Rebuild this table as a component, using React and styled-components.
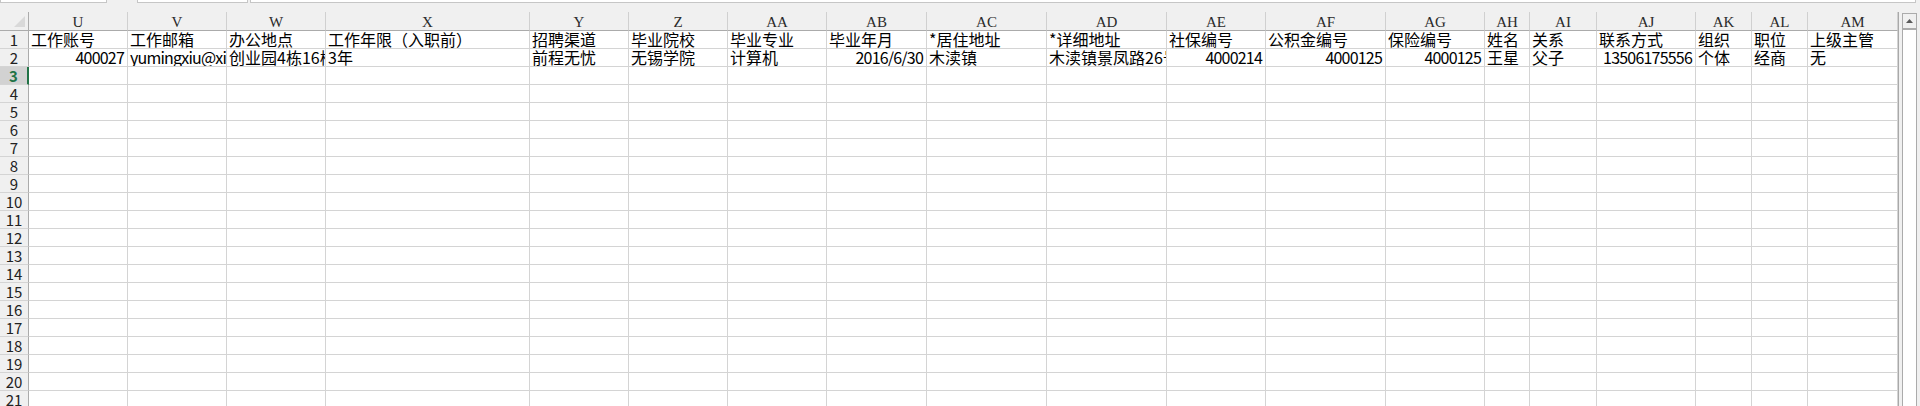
import React from 'react'
import styled, { createGlobalStyle } from 'styled-components'

const GlobalStyle = createGlobalStyle`
  html, body {
    margin: 0;
    padding: 0;
    background: #f0f0f0;
  }
  * { box-sizing: border-box; }
`

const columns = [
  { key: 'U', width: 99 },
  { key: 'V', width: 99 },
  { key: 'W', width: 99 },
  { key: 'X', width: 204 },
  { key: 'Y', width: 99 },
  { key: 'Z', width: 99 },
  { key: 'AA', width: 99 },
  { key: 'AB', width: 100 },
  { key: 'AC', width: 120 },
  { key: 'AD', width: 120 },
  { key: 'AE', width: 99 },
  { key: 'AF', width: 120 },
  { key: 'AG', width: 99 },
  { key: 'AH', width: 45 },
  { key: 'AI', width: 67 },
  { key: 'AJ', width: 99 },
  { key: 'AK', width: 56 },
  { key: 'AL', width: 56 },
  { key: 'AM', width: 90 },
]

const data = [
  ['工作账号', '工作邮箱', '办公地点', '工作年限（入职前）', '招聘渠道', '毕业院校', '毕业专业', '毕业年月', '*居住地址', '*详细地址', '社保编号', '公积金编号', '保险编号', '姓名', '关系', '联系方式', '组织', '职位', '上级主管'],
  ['400027', 'yumingxiu@xiaomi.com', '创业园4栋16楼', '3年', '前程无忧', '无锡学院', '计算机', '2016/6/30', '木渎镇', '木渎镇景凤路26号', '4000214', '4000125', '4000125', '王星', '父子', '13506175556', '个体', '经商', '无'],
]

const ROW_COUNT = 21
const SELECTED_ROW = 3

const isNumber = (v) => /^[\d/]+$/.test(v)
const isLatin = (v) => v !== '' && /^[\x20-\x7e]+$/.test(v)

const Page = styled.div`
  width: 1920px;
  height: 406px;
  overflow: hidden;
  background: #f0f0f0;
`

const FormulaStrip = styled.div`
  display: flex;
  align-items: flex-start;
  height: 12px;
`

const FormulaBox = styled.div`
  width: ${(p) => p.$width}px;
  margin-left: ${(p) => p.$offset || 0}px;
  height: 3px;
  background: #ffffff;
  border: 1px solid #c6c6c6;
  border-top: none;
`

const Body = styled.div`
  display: flex;
  align-items: flex-start;
`

const Sheet = styled.div`
  display: grid;
  grid-template-columns: 29px ${(p) => p.$cols};
  grid-template-rows: 19px repeat(${ROW_COUNT}, 18px);
  background: #ffffff;
  border-right: 1px solid #a9a9a9;
`

const Corner = styled.div`
  display: flex;
  align-items: flex-end;
  justify-content: flex-end;
  padding: 0 3px 3px 0;
  background: #f0f0f0;
  border-right: 1px solid #ababab;
  border-bottom: 1px solid #ababab;
`

const ColHeader = styled.div`
  background: #f0f0f0;
  border-right: 1px solid #d0d0d0;
  border-bottom: 1px solid #ababab;
  font-family: "Liberation Serif", "DejaVu Serif", serif;
  font-size: 15px;
  line-height: 19px;
  color: #2a2a2a;
  text-align: center;
  padding-top: 1px;
`

const RowHeader = styled.div`
  background: ${(p) => (p.$selected ? '#d2d2d2' : '#f0f0f0')};
  color: ${(p) => (p.$selected ? '#217346' : '#222222')};
  border-right: ${(p) => (p.$selected ? '2px solid #217346' : '1px solid #ababab')};
  border-bottom: 1px solid #d4d4d4;
  font-family: "Noto Sans CJK SC", "Liberation Sans", sans-serif;
  font-size: 15px;
  font-weight: ${(p) => (p.$selected ? 700 : 400)};
  line-height: 17px;
  text-align: center;
`

const Cell = styled.div`
  border-right: 1px solid #d4d4d4;
  border-bottom: 1px solid #d4d4d4;
  font-family: "Noto Sans CJK SC", "Liberation Sans", sans-serif;
  font-size: 16px;
  line-height: 17px;
  color: #000000;
  white-space: nowrap;
  overflow: hidden;
  letter-spacing: ${(p) => (p.$latin ? '-0.8px' : '0')};
  text-align: ${(p) => (p.$num ? 'right' : 'left')};
  padding: ${(p) => (p.$num ? '0 3px 0 2px' : '0 0 0 2px')};
`

const Scrollbar = styled.div`
  display: flex;
  flex-direction: column;
  width: 15px;
  height: 394px;
  margin-left: 3px;
  margin-top: 1px;
`

const ScrollButton = styled.div`
  display: flex;
  align-items: center;
  justify-content: center;
  height: 17px;
  background: #f0f0f0;
  border: 1px solid #ababab;
  border-bottom-width: 2px;
`

const ScrollTrack = styled.div`
  flex: 1;
  background: #ffffff;
  border-left: 1px solid #ababab;
  border-right: 1px solid #ababab;
`

export default function App() {
  const cols = columns.map((c) => `${c.width}px`).join(' ')
  const rowNumbers = Array.from({ length: ROW_COUNT }, (_, i) => i + 1)

  return (
    <Page>
      <GlobalStyle />
      <FormulaStrip>
        <FormulaBox $width={107} />
        <FormulaBox $width={111} $offset={30} />
        <FormulaBox $width={1666} $offset={2} />
      </FormulaStrip>
      <Body>
        <Sheet $cols={cols}>
          <Corner>
            <svg width="11" height="11" viewBox="0 0 11 11">
              <polygon points="11,0 11,11 0,11" fill="#d9d9d9" />
            </svg>
          </Corner>
          {columns.map((c) => (
            <ColHeader key={c.key}>{c.key}</ColHeader>
          ))}
          {rowNumbers.map((n) => (
            <React.Fragment key={n}>
              <RowHeader $selected={n === SELECTED_ROW}>{n}</RowHeader>
              {columns.map((c, ci) => {
                const v = data[n - 1] ? data[n - 1][ci] : ''
                return (
                  <Cell key={c.key} $num={isNumber(v)} $latin={isLatin(v)}>
                    {v}
                  </Cell>
                )
              })}
            </React.Fragment>
          ))}
        </Sheet>
        <Scrollbar>
          <ScrollButton>
            <svg width="7" height="4" viewBox="0 0 7 4">
              <polygon points="3.5,0 7,4 0,4" fill="#5a5a5a" />
            </svg>
          </ScrollButton>
          <ScrollTrack />
        </Scrollbar>
      </Body>
    </Page>
  )
}
